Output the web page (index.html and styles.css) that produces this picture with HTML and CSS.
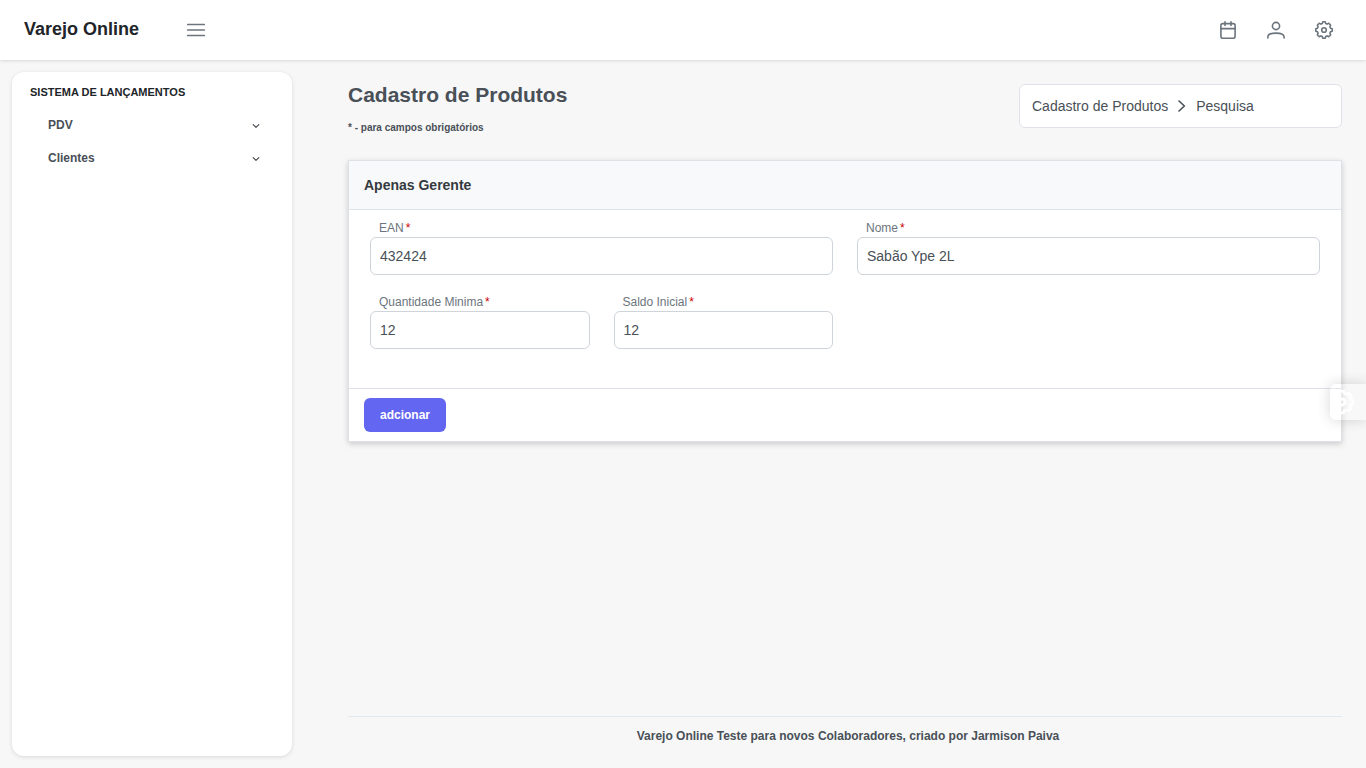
FILE: index.html
```html
<!DOCTYPE html>
<html lang="pt-BR">
<head>
<meta charset="utf-8">
<meta name="viewport" content="width=device-width, initial-scale=1">
<title>Varejo Online</title>
<link rel="stylesheet" href="styles.css">
</head>
<body>
<header class="topbar">
  <a class="brand" href="#">Varejo Online</a>
  <button class="icon-button menu-toggle" type="button" aria-label="Menu">
    <svg class="icon" viewBox="0 0 18 18"><path d="M.7 3.5h16.6M.7 9h16.6M.7 14.5h16.6"/></svg>
  </button>
  <nav class="topbar-actions" aria-label="Atalhos">
    <button class="icon-button" type="button" aria-label="Calendário">
      <svg class="icon" viewBox="0 0 18 18"><rect x="1.9" y="2.6" width="14.2" height="14.6" rx="2"/><path d="M1.9 7.6h14.200M6 .8v3.600M12 .8v3.600"/></svg>
    </button>
    <button class="icon-button" type="button" aria-label="Perfil">
      <svg class="icon" viewBox="0 0 18 18"><circle cx="9" cy="5" r="3.6"/><path d="M.9 17v-1c0-2.500 3.100-3.900 8.100-3.900s8.100 1.400 8.100 3.900v1"/></svg>
    </button>
    <button class="icon-button" type="button" aria-label="Configurações">
      <svg class="icon" viewBox="0 0 18 18"><use href="#gear"/></svg>
    </button>
  </nav>
</header>

<div class="layout">
  <aside class="sidebar">
    <h2 class="menu-title">Sistema de Lançamentos</h2>
    <ul class="menu">
      <li><a class="menu-link" href="#">PDV<svg class="chevron" viewBox="0 0 8 8"><path d="M1.2 2.6 4 5.4l2.8-2.8"/></svg></a></li>
      <li><a class="menu-link" href="#">Clientes<svg class="chevron" viewBox="0 0 8 8"><path d="M1.2 2.6 4 5.4l2.8-2.8"/></svg></a></li>
    </ul>
  </aside>

  <div class="content">
    <main class="page">
      <div class="page-head">
        <div>
          <h1 class="page-title">Cadastro de Produtos</h1>
          <p class="page-note">* - para campos obrigatórios</p>
        </div>
        <nav class="breadcrumb" aria-label="Navegação">
          <a href="#">Cadastro de Produtos</a>
          <svg class="separator" viewBox="0 0 8 12"><path d="m1 1 5.4 5L1 11"/></svg>
          <a href="#">Pesquisa</a>
        </nav>
      </div>

      <form class="card">
        <h2 class="card-head">Apenas Gerente</h2>
        <div class="fields">
          <div class="field wide">
            <label for="ean">EAN<span class="required">*</span></label>
            <input id="ean" type="text" value="432424">
          </div>
          <div class="field wide">
            <label for="nome">Nome<span class="required">*</span></label>
            <input id="nome" type="text" value="Sabão Ype 2L">
          </div>
          <div class="field">
            <label for="minima">Quantidade Minima<span class="required">*</span></label>
            <input id="minima" type="text" value="12">
          </div>
          <div class="field">
            <label for="saldo">Saldo Inicial<span class="required">*</span></label>
            <input id="saldo" type="text" value="12">
          </div>
        </div>
        <div class="card-foot">
          <button class="primary" type="button">adcionar</button>
        </div>
      </form>
    </main>
    <footer class="footer">Varejo Online Teste para novos Colaboradores, criado por Jarmison Paiva</footer>
  </div>
</div>

<button class="config" type="button" aria-label="Tema">
  <svg class="config-icon" viewBox="0 0 18 18">
    <g id="gear"><path d="M7.3 2.5 7.8 .8h2.4l.5 1.7 1.5.6 1.6-.8 1.9 1.9-.8 1.6.6 1.5 1.7.5v2.4l-1.7.5-.6 1.5.8 1.6-1.9 1.9-1.6-.8-1.5.6-.5 1.7H7.8l-.5-1.7-1.5-.6-1.6.8-1.9-1.9.8-1.6-.6-1.5L.8 10.2V7.8l1.7-.5.6-1.5-.8-1.6 1.9-1.9 1.6.8z"/><circle cx="9" cy="9" r="2.3"/></g>
  </svg>
</button>
</body>
</html>
```
FILE: styles.css
```css
* {
  box-sizing: border-box;
}

body {
  margin: 0;
  min-height: 100vh;
  display: flex;
  flex-direction: column;
  background: #f7f7f7;
  color: #495057;
  font: 12px/18px "Liberation Sans", Arial, sans-serif;
}

h1, h2, p, ul {
  margin: 0;
  padding: 0;
}

a {
  color: inherit;
  text-decoration: none;
}

button {
  border: 0;
  padding: 0;
  font: inherit;
  cursor: pointer;
}

svg {
  fill: none;
  stroke: currentColor;
  stroke-linecap: round;
  stroke-linejoin: round;
}

.topbar {
  display: flex;
  align-items: center;
  height: 60px;
  padding: 0 24px;
  background: #fff;
  box-shadow: 0 0 4px rgba(0, 0, 0, .2);
}

.brand {
  width: 154px;
  padding-bottom: 2px;
  color: #212529;
  font-size: 18px;
  font-weight: 700;
  line-height: 24px;
}

.icon-button {
  display: grid;
  place-items: center;
  width: 36px;
  height: 36px;
  background: none;
  color: #6c757d;
}

.icon {
  width: 18px;
  height: 18px;
  stroke-width: 1.6;
}

.topbar-actions {
  display: flex;
  gap: 12px;
  margin-left: auto;
}

.layout {
  flex: 1;
  display: flex;
}

.sidebar {
  width: 280px;
  margin: 12px;
  padding: 11px 18px;
  border-radius: 12px;
  background: #fff;
  box-shadow: 0 1px 4px rgba(0, 0, 0, .12);
}

.menu-title {
  color: #212529;
  font-size: 11px;
  line-height: 18px;
  text-transform: uppercase;
}

.menu {
  list-style: none;
  padding-top: 7px;
}

.menu-link {
  display: flex;
  align-items: center;
  justify-content: space-between;
  height: 33px;
  padding: 0 14px 0 18px;
  font-weight: 700;
}

.chevron {
  width: 8px;
  height: 8px;
  margin-top: 2px;
  stroke-width: 1.2;
}

.content {
  flex: 1;
  display: flex;
  flex-direction: column;
  padding: 24px 24px 12px 44px;
}

.page {
  flex: 1;
}

.page-head {
  display: flex;
  align-items: flex-start;
  justify-content: space-between;
  padding-bottom: 24px;
}

.page-title {
  margin: -2px 0 12px;
  font-size: 21px;
  line-height: 26px;
}

.page-note {
  font-size: 10px;
  font-weight: 700;
  line-height: 16px;
}

.breadcrumb {
  display: flex;
  align-items: center;
  gap: 10px;
  width: 323px;
  height: 44px;
  padding: 0 12px;
  border: 1px solid #dfe2e9;
  border-radius: 6px;
  background: #fff;
  font-size: 14px;
}

.separator {
  width: 8px;
  height: 12px;
  stroke-width: 1.6;
}

.card {
  border: 1px solid #dee2e6;
  background: #fff;
  box-shadow: 0 2px 6px rgba(0, 0, 0, .18);
}

.card-head {
  padding: 15px;
  border-bottom: 1px solid #dfe2e6;
  background: #f8f9fa;
  color: #343a40;
  font-size: 14px;
}

.fields {
  display: grid;
  grid-template-columns: repeat(4, 1fr);
  gap: 18px 24px;
  padding: 9px 21px 39px;
}

.field {
  display: flex;
  flex-direction: column;
}

.wide {
  grid-column: span 2;
}

.field label {
  padding-left: 9px;
  color: #6c757d;
}

.required {
  padding-left: 2px;
  color: #c00;
}

.field input {
  width: 100%;
  height: 38px;
  padding: 0 9px;
  border: 1px solid #ced4da;
  border-radius: 6px;
  background: #fff;
  color: #495057;
  font: 14px "Liberation Sans", Arial, sans-serif;
}

.card-foot {
  padding: 9px 15px;
  border-top: 1px solid #dfe2e9;
}

.primary {
  display: block;
  height: 34px;
  padding: 0 16px;
  border-radius: 6px;
  background: #6366f1;
  color: #fff;
  font-weight: 700;
}

.footer {
  border-top: 1px solid #dfe7ef;
  padding: 10px 0 11px 6px;
  font-weight: 700;
  text-align: center;
}

.config {
  position: fixed;
  right: 0;
  top: 50%;
  width: 36px;
  height: 36px;
  border-radius: 6px 0 0 6px;
  background: rgba(255, 255, 255, .2);
  box-shadow: 0 0 14px rgba(0, 0, 0, .16);
  color: #fff;
}

.config-icon {
  display: block;
  width: 24px;
  height: 24px;
  stroke-width: 2;
}
```
